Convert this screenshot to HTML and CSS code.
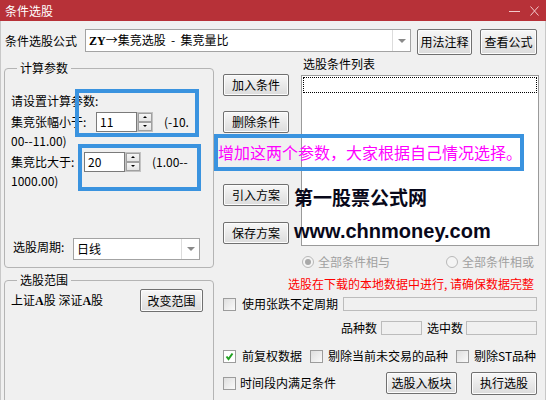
FILE: index.html
```html
<!DOCTYPE html>
<html lang="zh-CN">
<head>
  <meta charset="UTF-8" />
  <meta name="viewport" content="width=device-width, initial-scale=1.0"/>
  <title>条件选股</title>
  <link rel="stylesheet" href="styles.css">
</head>
<body>
  <div class="window">
    <!-- 标题栏 -->
    <div class="titlebar">
      <span class="title">条件选股</span>
      <div class="win-ctrls">
        <svg class="ctrl-min" width="11" height="11" viewBox="0 0 11 11"><line x1="0" y1="5.5" x2="11" y2="5.5" stroke="#f3c9cb" stroke-width="1"/></svg>
        <svg class="ctrl-close" width="9" height="10" viewBox="0 0 9 10"><path d="M0.5 0.5 L8.5 9.5 M8.5 0.5 L0.5 9.5" stroke="#f3c9cb" stroke-width="1" fill="none"/></svg>
      </div>
    </div>

    <div class="content">
      <!-- 公式选择 -->
      <div class="formula-row">
        <span class="formula-label">条件选股公式</span>
        <div class="combo formula-combo">
          <span class="combo-text"><span class="latin-b">ZY</span>→集竞选股 &nbsp;-&nbsp; 集竞量比</span>
          <span class="combo-arrow"></span>
        </div>
        <button class="btn btn-usage">用法注释</button>
        <button class="btn btn-view">查看公式</button>
      </div>

      <div class="main">
        <!-- 左侧 -->
        <div class="left-col">
          <fieldset class="group calc-group">
            <legend>计算参数</legend>
            <div class="line first-line">请设置计算参数:</div>
            <div class="param-row">
              <span class="param-label w-long">集竞张幅小于:</span>
              <div class="spin">
                <div class="spin-input">11</div>
                <div class="spin-btns"><span class="up"></span><span class="down"></span></div>
              </div>
              <span class="range">(-10.</span>
            </div>
            <div class="line wrap-line">00--11.00)</div>
            <div class="param-row">
              <span class="param-label w-short">集竞比大于:</span>
              <div class="spin">
                <div class="spin-input">20</div>
                <div class="spin-btns"><span class="up"></span><span class="down"></span></div>
              </div>
              <span class="range">(1.00--</span>
            </div>
            <div class="line wrap-line">1000.00)</div>
            <div class="period-row">
              <span class="period-label">选股周期:</span>
              <div class="combo period-combo">
                <span class="combo-text">日线</span>
                <span class="combo-arrow"></span>
              </div>
            </div>
          </fieldset>

          <fieldset class="group range-group">
            <legend>选股范围</legend>
            <div class="range-row">
              <span>上证<span class="serif-a">A</span>股 深证<span class="serif-a">A</span>股</span>
              <button class="btn btn-range">改变范围</button>
            </div>
          </fieldset>
        </div>

        <!-- 右侧 -->
        <div class="right-col">
          <div class="cond-area">
            <div class="btn-col">
              <button class="btn btn-side">加入条件</button>
              <button class="btn btn-side btn-del">删除条件</button>
              <button class="btn btn-side btn-load">引入方案</button>
              <button class="btn btn-side btn-save">保存方案</button>
            </div>
            <div class="list-col">
              <div class="list-label">选股条件列表</div>
              <div class="list-box">
                <div class="focus-rect"></div>
              </div>
            </div>
          </div>

          <div class="radio-row">
            <span class="radio checked"></span><span class="radio-text">全部条件相与</span>
            <span class="radio radio-or"></span><span class="radio-text">全部条件相或</span>
          </div>

          <div class="warn">选股在下载的本地数据中进行, 请确保数据完整</div>

          <div class="opt-row row-period">
            <span class="check"></span><span class="opt-text">使用张跌不定周期</span>
            <div class="field field-period"></div>
          </div>

          <div class="count-row">
            <span>品种数</span><div class="field field-count"></div>
            <span class="count-sel">选中数</span><div class="field field-sel"></div>
          </div>

          <div class="opt-row row-flags">
            <span class="check checked"><svg width="11" height="11" viewBox="0 0 11 11"><path d="M2.5 5.5 L4.5 8 L8.5 2.5" stroke="#21a121" stroke-width="2" fill="none"/></svg></span><span class="opt-text">前复权数据</span>
            <span class="check chk-mid"></span><span class="opt-text opt-tight">剔除当前未交易的品种</span>
            <span class="check chk-st"></span><span class="opt-text opt-tight">剔除ST品种</span>
          </div>

          <div class="opt-row row-run">
            <span class="check"></span><span class="opt-text opt-time">时间段内满足条件</span>
            <button class="btn btn-block">选股入板块</button>
            <button class="btn btn-run">执行选股</button>
          </div>
        </div>
      </div>
    </div>

    <!-- 标注 -->
    <div class="mark mark-one"></div>
    <div class="mark mark-two"></div>
    <div class="mark mark-note">增加这两个参数，大家根据自己情况选择。</div>
    <div class="stamp stamp-cn">第一股票公式网</div>
    <div class="stamp stamp-url">www.chnmoney.com</div>
  </div>
</body>
</html>
```

FILE: styles.css
```css
body {
  margin: 0;
  background: #f0f0f0;
  font-family: "Noto Sans CJK SC", "Noto Sans", sans-serif;
  font-size: 12px;
  line-height: 14px;
  color: #000;
}
.window {
  position: relative;
  width: 546px;
  height: 400px;
  overflow: hidden;
  background: #f0f0f0;
}
.titlebar {
  height: 21px;
  background: #b73138;
  color: #fff;
  display: flex;
  justify-content: space-between;
  align-items: center;
  padding: 0 7px 0 5px;
}
.title {
  font-size: 12px;
  line-height: 21px;
}
.win-ctrls {
  display: flex;
  align-items: center;
  gap: 10px;
}
.ctrl-min {
  margin-top: 2px;
}
.content {
  border-left: 1px solid #c8c8c8;
  border-right: 1px solid #c8c8c8;
  height: 379px;
  box-sizing: border-box;
}

/* 按钮 */
.btn {
  font-family: inherit;
  font-size: 12px;
  line-height: 14px;
  color: #000;
  padding: 0;
  border: 1px solid #707070;
  border-radius: 2px;
  background: linear-gradient(#f7f7f7, #e9e9e9 50%, #dcdcdc);
  box-shadow: inset 0 0 0 1px #fcfcfc;
  white-space: nowrap;
  flex-shrink: 0;
}

/* 下拉框 */
.combo {
  display: flex;
  background: #fff;
  border: 1px solid #a3a3a3;
  box-sizing: border-box;
}
.combo-text {
  flex: 1;
  padding-left: 3px;
  align-self: center;
  white-space: nowrap;
}
.combo-arrow {
  width: 17px;
  border-left: 1px solid #dcdcdc;
  position: relative;
}
.combo-arrow::after {
  content: "";
  position: absolute;
  left: 5px;
  top: 50%;
  margin-top: -2px;
  border-left: 4px solid transparent;
  border-right: 4px solid transparent;
  border-top: 4px solid #8a8a8a;
}

.formula-row {
  display: flex;
  align-items: flex-start;
  padding: 8px 0 0 4px;
  height: 26px;
}
.formula-label {
  line-height: 23px;
  width: 80px;
}
.formula-combo {
  width: 326px;
  height: 23px;
}
.latin-b {
  font-family: "Liberation Serif", serif;
  font-weight: bold;
}
.btn-usage {
  width: 55px;
  height: 26px;
  margin-left: 6px;
}
.btn-view {
  width: 57px;
  height: 26px;
  margin-left: 8px;
}

.main {
  display: flex;
  padding-left: 3px;
}

/* 左侧分组 */
.left-col {
  width: 210px;
  display: flex;
  flex-direction: column;
}
.group {
  margin: 0;
  padding: 0 5px 0 6px;
  border: 1px solid #b4b4b4;
  border-radius: 4px;
  min-width: 0;
}
.group legend {
  padding: 0 3px;
  margin-left: 6px;
  line-height: 14px;
}
.calc-group {
  margin-top: 6px;
  height: 207px;
  box-sizing: border-box;
}
.first-line {
  margin-top: 19px;
}
.param-row {
  display: flex;
  align-items: center;
  height: 20px;
  margin-top: 4px;
  white-space: nowrap;
}
.param-label.w-long {
  width: 85px;
}
.param-label.w-short {
  width: 73px;
}
.spin {
  display: flex;
  height: 20px;
}
.spin-input {
  width: 41px;
  box-sizing: border-box;
  background: #fff;
  border: 1px solid #7a7a7a;
  padding-left: 3px;
  line-height: 18px;
}
.spin-btns {
  width: 16px;
  display: flex;
  flex-direction: column;
  border: 1px solid #c2c2c2;
  box-sizing: border-box;
}
.spin-btns span {
  flex: 1;
  position: relative;
  background: linear-gradient(#f6f6f6, #e4e4e4);
  border: 1px solid #a0a0a0;
}
.spin-btns .up::after,
.spin-btns .down::after {
  content: "";
  position: absolute;
  left: 4px;
  top: 2px;
  border-left: 2px solid transparent;
  border-right: 2px solid transparent;
}
.spin-btns .up::after {
  border-bottom: 2px solid #000;
}
.spin-btns .down::after {
  border-top: 2px solid #000;
}
.range {
  margin-left: 11px;
}
.wrap-line {
  margin-top: 2px;
}
.period-row {
  display: flex;
  align-items: flex-start;
  margin-top: 50px;
  padding-left: 2px;
}
.period-label {
  width: 60px;
  margin-top: 2px;
}
.period-combo {
  width: 127px;
  height: 22px;
}
.range-group {
  margin-top: 5px;
  height: 200px;
}
.range-row {
  display: flex;
  align-items: center;
  justify-content: space-between;
  margin-top: 2px;
  padding-right: 5px;
}
.serif-a {
  font-family: "Liberation Serif", serif;
  font-weight: bold;
}
.btn-range {
  width: 63px;
  height: 23px;
}

/* 右侧 */
.right-col {
  width: 316px;
  margin-left: 9px;
  display: flex;
  flex-direction: column;
}
.cond-area {
  display: flex;
}
.btn-col {
  width: 66px;
  display: flex;
  flex-direction: column;
  padding-top: 19px;
}
.btn-side {
  height: 22px;
}
.btn-del {
  margin-top: 15px;
}
.btn-load {
  margin-top: 51px;
}
.btn-save {
  margin-top: 16px;
}
.list-col {
  width: 238px;
  margin-left: 12px;
}
.list-label {
  margin-top: 2px;
  padding-left: 2px;
}
.list-box {
  margin-top: 4px;
  height: 171px;
  box-sizing: border-box;
  background: #fff;
  border: 1px solid #9a9a9a;
  padding: 1px;
}
.focus-rect {
  height: 16px;
  border: 1px dotted #000;
  box-sizing: border-box;
}

.radio-row {
  display: flex;
  align-items: center;
  height: 14px;
  margin-top: 9px;
  padding-left: 79px;
  color: #a0a0a0;
  white-space: nowrap;
}
.radio {
  width: 12px;
  height: 12px;
  box-sizing: border-box;
  border-radius: 50%;
  border: 1px solid #b8b8b8;
  background: #f4f4f4;
  position: relative;
  flex-shrink: 0;
}
.radio.checked::after {
  content: "";
  position: absolute;
  left: 2px;
  top: 2px;
  width: 6px;
  height: 6px;
  border-radius: 50%;
  background: #a8a8a8;
}
.radio-text {
  margin-left: 4px;
}
.radio-or {
  margin-left: 56px;
}

.warn {
  height: 14px;
  margin-top: 8px;
  color: #f00;
  text-align: right;
  padding-right: 5px;
  white-space: nowrap;
}

.opt-row {
  display: flex;
  align-items: center;
  height: 14px;
  white-space: nowrap;
}
.check {
  width: 13px;
  height: 13px;
  box-sizing: border-box;
  border: 1px solid #9c9c9c;
  background: linear-gradient(135deg, #dedede, #fafafa);
  display: flex;
  align-items: center;
  justify-content: center;
  flex-shrink: 0;
}
.check.checked {
  background: #fff;
}
.opt-text {
  margin-left: 6px;
  flex-shrink: 0;
}
.opt-text.opt-tight {
  margin-left: 5px;
}
.row-period {
  margin-top: 6px;
}
.field {
  box-sizing: border-box;
  border: 1px solid #bcbcbc;
  background: #f0f0f0;
  height: 14px;
  flex-shrink: 0;
}
.field-period {
  width: 194px;
  margin-left: 5px;
}
.count-row {
  display: flex;
  align-items: center;
  height: 14px;
  margin-top: 10px;
  padding-left: 118px;
  white-space: nowrap;
}
.field-count {
  width: 41px;
  margin-left: 4px;
}
.count-sel {
  margin-left: 5px;
}
.field-sel {
  width: 71px;
  margin-left: 3px;
}
.row-flags {
  margin-top: 14px;
}
.chk-mid {
  margin-left: 8px;
}
.chk-st {
  margin-left: 8px;
}
.row-run {
  height: 22px;
  margin-top: 9px;
}
.opt-time {
  margin-left: 4px;
}
.btn-block {
  width: 71px;
  height: 22px;
  margin-left: 50px;
}
.btn-run {
  width: 66px;
  height: 23px;
  margin-left: 14px;
}

/* 标注框与水印 */
.mark {
  position: absolute;
  border: 4px solid #3a93df;
  box-sizing: border-box;
}
.mark-one {
  left: 75px;
  top: 89px;
  width: 124px;
  height: 48px;
}
.mark-two {
  left: 78px;
  top: 144px;
  width: 123px;
  height: 47px;
}
.mark-note {
  left: 214px;
  top: 134px;
  width: 310px;
  height: 37px;
  color: #ff00ff;
  font-size: 16px;
  line-height: 29px;
  white-space: nowrap;
}
.stamp {
  position: absolute;
  left: 294px;
  font-weight: bold;
  color: #08081a;
  white-space: nowrap;
}
.stamp-cn {
  top: 187px;
  font-size: 19px;
  line-height: 20px;
}
.stamp-url {
  top: 221px;
  font-family: "Liberation Sans", sans-serif;
  font-size: 20px;
  line-height: 20px;
}
```
